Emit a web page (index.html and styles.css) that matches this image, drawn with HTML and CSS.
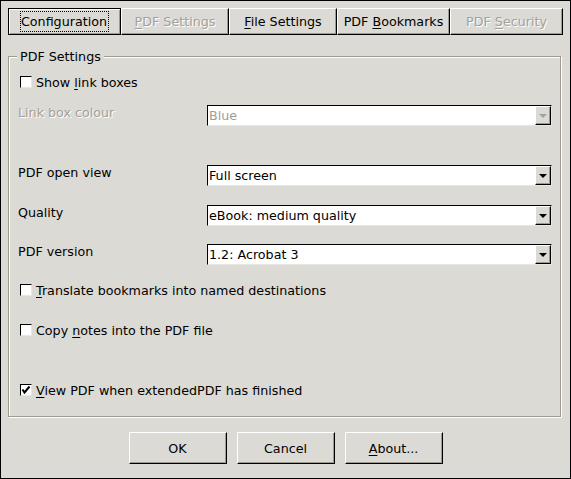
FILE: index.html
```html
<!DOCTYPE html>
<html>
<head>
<meta charset="utf-8">
<link rel="stylesheet" href="styles.css">
</head>
<body>
<div class="window">
  <div class="tabbar">
    <div class="tab tab-default w113"><span class="focus">Configuration</span></div>
    <div class="tab disabled w108"><span><u>P</u>DF Settings</span></div>
    <div class="tab w108"><span><u>F</u>ile Settings</span></div>
    <div class="tab w113"><span>PDF <u>B</u>ookmarks</span></div>
    <div class="tab disabled w113"><span>PDF <u>S</u>ecurity</span></div>
  </div>

  <div class="group">
    <span class="legend">PDF Settings</span>

    <div class="check-row r1">
      <span class="checkbox"></span>
      <span>Show <u>l</u>ink boxes</span>
    </div>

    <div class="combo-row r2">
      <span class="label disabled">Link box colour</span>
      <div class="combo disabled">
        <span class="combo-text">Blue</span>
        <span class="combo-btn"><span class="arrow"></span></span>
      </div>
    </div>

    <div class="combo-row r3">
      <span class="label">PDF open view</span>
      <div class="combo">
        <span class="combo-text">Full screen</span>
        <span class="combo-btn"><span class="arrow"></span></span>
      </div>
    </div>

    <div class="combo-row r4">
      <span class="label">Quality</span>
      <div class="combo">
        <span class="combo-text">eBook: medium quality</span>
        <span class="combo-btn"><span class="arrow"></span></span>
      </div>
    </div>

    <div class="combo-row r5">
      <span class="label">PDF version</span>
      <div class="combo">
        <span class="combo-text">1.2: Acrobat 3</span>
        <span class="combo-btn"><span class="arrow"></span></span>
      </div>
    </div>

    <div class="check-row r6">
      <span class="checkbox"></span>
      <span><u>T</u>ranslate bookmarks into named destinations</span>
    </div>

    <div class="check-row r7">
      <span class="checkbox"></span>
      <span>Copy <u>n</u>otes into the PDF file</span>
    </div>

    <div class="check-row r8">
      <span class="checkbox checked"><svg width="10" height="10" viewBox="0 0 10 10"><polyline points="1.5,4.5 3.5,7.5 8.5,1.5" fill="none" stroke="#000" stroke-width="2"/></svg></span>
      <span><u>V</u>iew PDF when extendedPDF has finished</span>
    </div>
  </div>

  <div class="buttons">
    <div class="button">OK</div>
    <div class="button">Cancel</div>
    <div class="button"><u>A</u>bout...</div>
  </div>
</div>
</body>
</html>
```

FILE: styles.css
```css
html, body {
  margin: 0;
  padding: 0;
  background: #dcdad5;
}

.window {
  width: 571px;
  height: 479px;
  box-sizing: border-box;
  border: 1px solid #000;
  padding: 7px;
  background: #dcdad5;
  font-family: "DejaVu Sans", sans-serif;
  font-size: 12.7px;
  line-height: 15px;
  color: #000;
}

u {
  text-decoration: underline;
  text-underline-offset: 2px;
}

.disabled {
  color: #a3a19b;
  text-shadow: 1px 1px 0 #fff;
}

/* Tabs */
.tabbar {
  display: flex;
  height: 27px;
  width: 555px;
}

.tab {
  box-sizing: border-box;
  height: 27px;
  display: flex;
  align-items: center;
  justify-content: center;
  border-top: 1px solid #fff;
  border-left: 1px solid #fff;
  border-right: 1px solid #000;
  border-bottom: 1px solid #000;
  box-shadow: inset -1px -1px 0 #9e9a91;
}

.w113 { width: 113px; }
.w108 { width: 108px; }

.tab-default {
  border: 1px solid #000;
  box-shadow: inset 1px 1px 0 #fff, inset -1px -1px 0 #9e9a91;
}

.focus {
  outline: 1px dotted #000;
  outline-offset: 0;
  padding: 2px 1px 2px 0;
}

/* Group box */
.group {
  position: relative;
  box-sizing: border-box;
  width: 553px;
  height: 361px;
  margin-top: 21px;
  border: 1px solid #9e9a91;
  box-shadow: inset 1px 1px 0 #fff, 1px 1px 0 #fff;
  padding: 19px 0 0 9px;
}

.legend {
  position: absolute;
  left: 8px;
  top: -8px;
  padding: 0 3px;
  background: #dcdad5;
}

.check-row {
  display: flex;
  align-items: center;
  height: 14px;
}

.checkbox {
  box-sizing: border-box;
  width: 12px;
  height: 12px;
  margin-left: 2px;
  margin-right: 4px;
  background: #fff;
  border-top: 1px solid #000;
  border-left: 1px solid #000;
  border-right: 1px solid #e8e6e1;
  border-bottom: 1px solid #e8e6e1;
  display: flex;
  align-items: center;
  justify-content: center;
}

.combo-row {
  display: flex;
  align-items: flex-start;
  height: 21px;
}

.label {
  width: 189px;
}

.combo {
  box-sizing: border-box;
  width: 345px;
  height: 21px;
  display: flex;
  align-items: stretch;
  background: #fff;
  border-top: 1px solid #000;
  border-left: 1px solid #000;
  border-right: 1px solid #e8e6e1;
  border-bottom: 1px solid #e8e6e1;
}

.combo-text {
  flex: 1;
  padding-left: 1px;
  line-height: 19px;
}

.combo.disabled .combo-text {
  color: #9e9c96;
  text-shadow: none;
}

.combo-btn {
  box-sizing: border-box;
  width: 16px;
  background: #dcdad5;
  border-top: 1px solid #fff;
  border-left: 1px solid #fff;
  border-right: 1px solid #000;
  border-bottom: 1px solid #000;
  box-shadow: inset -1px -1px 0 #9e9a91;
  display: flex;
  align-items: center;
  justify-content: center;
}

.arrow {
  width: 0;
  height: 0;
  border-left: 4px solid transparent;
  border-right: 4px solid transparent;
  border-top: 4px solid #000;
  margin-top: 1px;
}

.combo.disabled .arrow {
  border-top-color: #a3a19b;
}

.r1 { margin-top: -1px; }
.r2 { margin-top: 16px; }
.r3 { margin-top: 39px; }
.r4 { margin-top: 19px; }
.r5 { margin-top: 18px; }
.r6 { margin-top: 18px; }
.r7 { margin-top: 26px; }
.r8 { margin-top: 46px; }

/* Bottom buttons */
.buttons {
  display: flex;
  justify-content: center;
  gap: 10px;
  width: 555px;
  margin-top: 15px;
}

.button {
  box-sizing: border-box;
  width: 98px;
  height: 32px;
  display: flex;
  align-items: center;
  justify-content: center;
  border-top: 1px solid #fff;
  border-left: 1px solid #fff;
  border-right: 1px solid #000;
  border-bottom: 1px solid #000;
  box-shadow: inset -1px -1px 0 #9e9a91;
}
```
